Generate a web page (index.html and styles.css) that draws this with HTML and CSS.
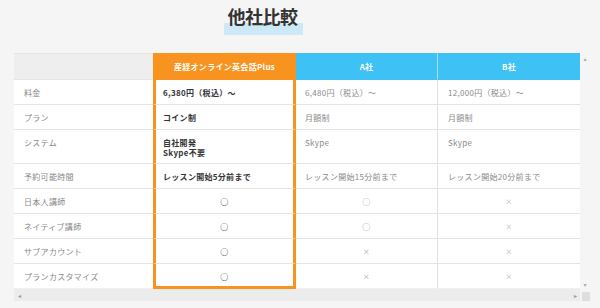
FILE: index.html
```html
<!DOCTYPE html>
<html lang="ja">
<head>
<meta charset="utf-8">
<title>他社比較</title>
<link rel="stylesheet" href="styles.css">
</head>
<body>
<div class="title-wrap">
  <h2 class="title"><span>他社比較</span></h2>
</div>
<div class="scroller">
  <div class="scroll-main">
    <table class="compare">
      <colgroup>
        <col class="c-label"><col class="c-plus"><col class="c-a"><col class="c-b">
      </colgroup>
      <thead>
        <tr>
          <th class="h-label"></th>
          <th class="h-plus">産経オンライン英会話Plus</th>
          <th class="h-a">A社</th>
          <th class="h-b">B社</th>
        </tr>
      </thead>
      <tbody>
        <tr>
          <td class="label">料金</td>
          <td class="plus">6,380円（税込）～</td>
          <td class="a">6,480円（税込）～</td>
          <td class="b">12,000円（税込）～</td>
        </tr>
        <tr>
          <td class="label">プラン</td>
          <td class="plus">コイン制</td>
          <td class="a">月額制</td>
          <td class="b">月額制</td>
        </tr>
        <tr>
          <td class="label">システム</td>
          <td class="plus two">自社開発<br>Skype不要</td>
          <td class="a">Skype</td>
          <td class="b">Skype</td>
        </tr>
        <tr>
          <td class="label">予約可能時間</td>
          <td class="plus">レッスン開始5分前まで</td>
          <td class="a">レッスン開始15分前まで</td>
          <td class="b">レッスン開始20分前まで</td>
        </tr>
        <tr>
          <td class="label">日本人講師</td>
          <td class="plus mark">○</td>
          <td class="a mark">○</td>
          <td class="b mark x">×</td>
        </tr>
        <tr>
          <td class="label">ネイティブ講師</td>
          <td class="plus mark">○</td>
          <td class="a mark">○</td>
          <td class="b mark x">×</td>
        </tr>
        <tr>
          <td class="label">サブアカウント</td>
          <td class="plus mark">○</td>
          <td class="a mark x">×</td>
          <td class="b mark x">×</td>
        </tr>
        <tr class="last">
          <td class="label">プランカスタマイズ</td>
          <td class="plus mark">○</td>
          <td class="a mark x">×</td>
          <td class="b mark x">×</td>
        </tr>
      </tbody>
    </table>
    <div class="vbar"><span>▴</span><span>▾</span></div>
  </div>
  <div class="hbar-row">
    <div class="hbar"><span>◂</span><span>▸</span></div>
    <div class="corner"></div>
  </div>
</div>
</body>
</html>
```

FILE: styles.css
```css
body {
  margin: 0;
  background: #f5f5f5;
  font-family: "Noto Sans CJK JP", "Noto Sans", sans-serif;
}

.title-wrap {
  height: 53px;
  box-sizing: border-box;
  padding: 7px 74px 0 0;
  text-align: center;
}

.title {
  margin: 0;
  font-size: 18px;
  font-weight: 700;
  line-height: 19px;
  color: #333;
}

.title span {
  display: inline-block;
  padding: 0 5px 9px 4px;
  letter-spacing: -0.5px;
  background: linear-gradient(transparent 16px, #cde8f6 16px);
}

.scroller {
  margin-left: 14px;
  width: 576px;
}

.scroll-main {
  display: flex;
}

.compare {
  width: 566px;
  table-layout: fixed;
  border-collapse: separate;
  border-spacing: 0;
  background: #fff;
  font-size: 8px;
  line-height: 9px;
  letter-spacing: 0.3px;
}

.c-label { width: 139px; }
.c-plus { width: 143px; }
.c-a { width: 141px; }
.c-b { width: 143px; }

.compare th {
  padding: 8px 4px;
  border-top: 1px solid #e4e4e4;
  border-bottom: 1px solid #e4e4e4;
  color: #fff;
  font-weight: 700;
  text-align: center;
}

.compare .h-label {
  background: #eeeeee;
}

.compare .h-plus {
  background: #f7931e;
  border-top-color: #f7931e;
  border-bottom-color: #f7931e;
  border-left: 3px solid #f7931e;
  border-right: 3px solid #f7931e;
}

.compare .h-a,
.compare .h-b {
  background: #3ec1f4;
  border-top-color: #3ec1f4;
  border-bottom-color: #3ec1f4;
}

.compare .h-b {
  border-left: 1px solid #a9def5;
}

.compare td {
  padding: 8px 10px 7px 10px;
  border-bottom: 1px solid #e4e4e4;
  vertical-align: top;
  color: #888;
  text-align: left;
}

.compare td.plus {
  padding-left: 7px;
  border-left: 3px solid #f7931e;
  border-right: 3px solid #f7931e;
  color: #333;
  font-weight: 700;
}

.compare td.plus.two {
  padding-top: 8px;
  padding-bottom: 5px;
  line-height: 10px;
}

.compare td.a {
  padding-left: 9px;
}

.compare td.b {
  border-left: 1px solid #e0e0e0;
}

.compare td.mark {
  text-align: center;
  padding-left: 4px;
  padding-right: 4px;
}

.compare td.plus.mark {
  color: #333;
  font-weight: 700;
}

.compare td.a.mark {
  color: #999;
}

.compare td.x {
  color: #aaa;
  font-size: 7px;
}

.compare .last td {
  border-bottom: 1px solid #f0f0f0;
}

.compare .last td.plus {
  padding-bottom: 5px;
  border-bottom: 3px solid #f7931e;
}

.vbar {
  width: 10px;
  display: flex;
  flex-direction: column;
  justify-content: space-between;
  align-items: center;
  padding: 2px 0 0;
  font-family: "DejaVu Sans", sans-serif;
  font-size: 6px;
  line-height: 8px;
  color: #aaa;
}

.hbar-row {
  display: flex;
}

.hbar {
  width: 566px;
  height: 12px;
  box-sizing: border-box;
  padding: 0 3px 0 4px;
  background: #ececec;
  display: flex;
  justify-content: space-between;
  align-items: center;
  font-family: "DejaVu Sans", sans-serif;
  font-size: 6px;
  color: #999;
}

.corner {
  width: 8px;
  height: 9px;
  margin: 3px 0 0 2px;
  background: #dedede;
}
```
